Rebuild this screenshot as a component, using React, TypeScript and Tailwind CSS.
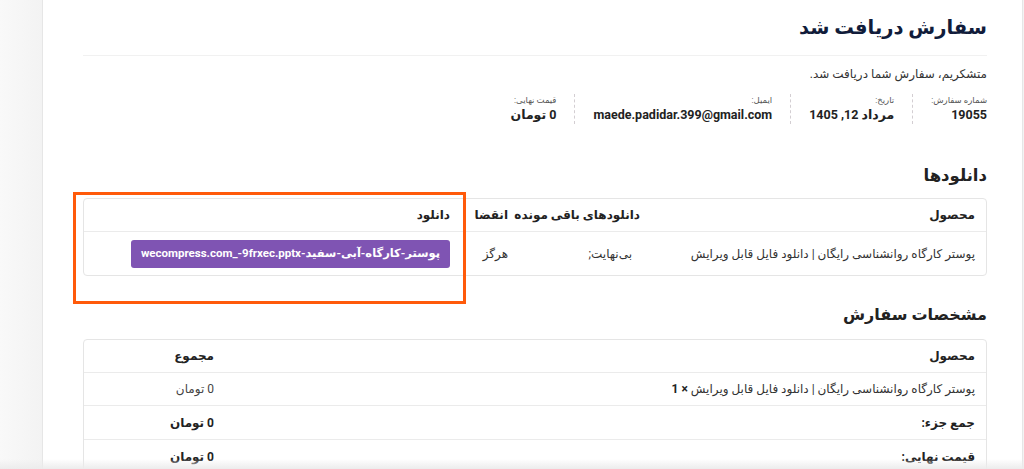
import React from "react";

const font = { fontFamily: 'Roboto, "DejaVu Sans", "Noto Sans", sans-serif' };

function OverviewItem({ label, value, last }: { label: string; value: string; last?: boolean }) {
  return (
    <div className={`flex flex-col pl-[18px] ml-[18px] ${last ? "" : "border-l border-dashed border-[#d3ced2]"}`}>
      <span className="text-[8.5px] leading-[12px] text-[#555]">{label}</span>
      <span className="text-[12.5px] leading-[18px] font-bold text-[#222] whitespace-nowrap">{value}</span>
    </div>
  );
}

export default function App() {
  return (
    <div className="w-[1024px] h-[469px] overflow-hidden flex bg-white relative" style={font}>
      <div className="w-[43px] shrink-0 bg-gradient-to-r from-[#f9f9f9] to-[#f3f3f3] border-r border-[#e6e6e6]" />
      <main dir="rtl" className="flex-1 pr-[35px] pl-[40px] text-[#333]">
        <h1 className="pt-[12px] pb-[11px] text-[19.5px] leading-[32px] font-bold text-[#111c3a] border-b border-[#f1f1f1]">
          سفارش دریافت شد
        </h1>
        <p className="mt-[8px] text-[12px] leading-[20px] text-[#333]">متشکریم، سفارش شما دریافت شد.</p>
        <div className="mt-[9px] flex py-[1px]">
          <OverviewItem label="شماره سفارش:" value="19055" />
          <OverviewItem label="تاریخ:" value="مرداد 12, 1405" />
          <OverviewItem label="ایمیل:" value="maede.padidar.399@gmail.com" />
          <OverviewItem label="قیمت نهایی:" value="0 تومان" last />
        </div>

        <h2 className="mt-[39px] text-[16.5px] leading-[24px] font-bold text-[#222]">دانلودها</h2>
        <div className="mt-[10px] border border-[#e5e5e5] rounded-[4px] text-[12px]">
          <div className="grid grid-cols-[335px_132px_58px_1fr] h-[33px] items-center border-b border-[#ebebeb] font-bold text-[#222] whitespace-nowrap">
            <div className="px-[11px]">محصول</div>
            <div className="px-[11px]">دانلودهای باقی مونده</div>
            <div className="pr-[11px]">انقضا</div>
            <div className="px-[11px]">دانلود</div>
          </div>
          <div className="grid grid-cols-[335px_132px_58px_1fr] h-[43px] items-center text-[#333] whitespace-nowrap">
            <div className="px-[11px]">پوستر کارگاه روانشناسی رایگان | دانلود فایل قابل ویرایش</div>
            <div className="px-[11px] pr-[19px]">بی‌نهایت;</div>
            <div className="pr-[11px]">هرگز</div>
            <div className="px-[11px] flex">
              <span className="inline-flex items-center h-[28px] px-[10px] rounded-[3px] bg-[#7f54b3] text-white font-bold text-[11.5px]">
                پوستر-کارگاه-آبی-سفید-wecompress.com_-9frxec.pptx
              </span>
            </div>
          </div>
        </div>

        <h2 className="mt-[27px] text-[16px] leading-[24px] font-bold text-[#222]">مشخصات سفارش</h2>
        <div className="mt-[12px] border border-[#e5e5e5] rounded-[4px] text-[12px]">
          <div className="grid grid-cols-[1fr_141px] h-[33px] items-center border-b border-[#ebebeb] font-bold text-[#222]">
            <div className="px-[11px]">محصول</div>
            <div className="px-[11px]">مجموع</div>
          </div>
          <div className="grid grid-cols-[1fr_141px] h-[33px] items-center border-b border-[#ebebeb] text-[#333]">
            <div className="px-[11px]">
              پوستر کارگاه روانشناسی رایگان | دانلود فایل قابل ویرایش <strong className="font-bold text-[#222]">× 1</strong>
            </div>
            <div className="px-[11px] text-[#444]">0 تومان</div>
          </div>
          <div className="grid grid-cols-[1fr_141px] h-[34px] items-center border-b border-[#ebebeb] font-bold text-[#222]">
            <div className="px-[11px]">جمع جزء:</div>
            <div className="px-[11px]">0 تومان</div>
          </div>
          <div className="grid grid-cols-[1fr_141px] h-[34px] items-center font-bold text-[#222]">
            <div className="px-[11px]">قیمت نهایی:</div>
            <div className="px-[11px]">0 تومان</div>
          </div>
        </div>
      </main>
      <div className="w-[2px] shrink-0 bg-[#f3f3f3] border-l border-[#e6e6e6]" />

      <div className="absolute left-[73px] top-[192px] w-[393px] h-[112px] border-[3px] border-[#ff5a0a] pointer-events-none" />
      <div className="absolute left-0 right-0 bottom-0 h-[10px] bg-gradient-to-b from-transparent to-[#ececec] pointer-events-none" />
    </div>
  );
}
